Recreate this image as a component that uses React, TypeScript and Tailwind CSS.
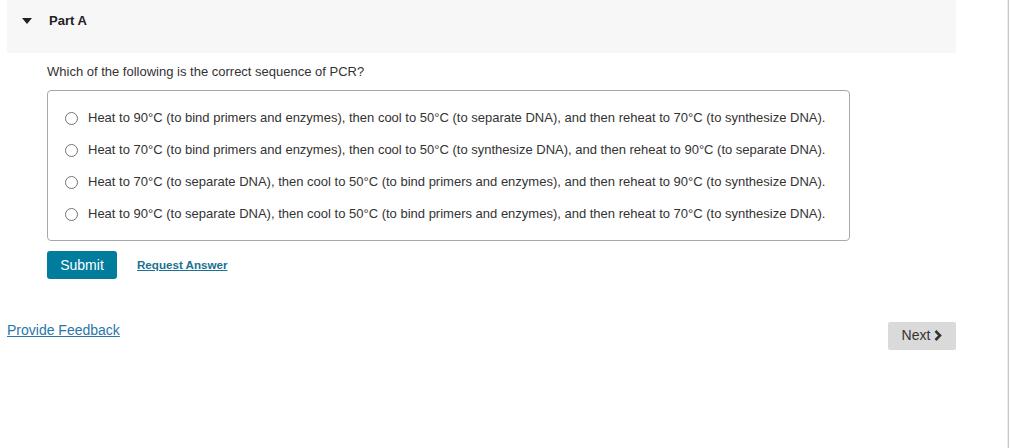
import React from 'react';

const options = [
  'Heat to 90°C (to bind primers and enzymes), then cool to 50°C (to separate DNA), and then reheat to 70°C (to synthesize DNA).',
  'Heat to 70°C (to bind primers and enzymes), then cool to 50°C (to synthesize DNA), and then reheat to 90°C (to separate DNA).',
  'Heat to 70°C (to separate DNA), then cool to 50°C (to bind primers and enzymes), and then reheat to 90°C (to synthesize DNA).',
  'Heat to 90°C (to separate DNA), then cool to 50°C (to bind primers and enzymes), and then reheat to 70°C (to synthesize DNA).',
];

function Radio() {
  return <span className="w-[13px] h-[13px] rounded-full border border-[#767676] bg-white shrink-0" />;
}

export default function App() {
  return (
    <div className="flex h-[448px] w-[1010px] bg-white font-['Liberation_Sans',Arial,sans-serif] text-[#333]">
      <div className="flex-1 pl-[7px] pr-[51px]">
        {/* part header */}
        <div className="flex items-center h-[53px] bg-[#f7f7f7] pl-[15px] pb-[12px]">
          <svg width="10" height="6" viewBox="0 0 10 6" className="mr-[17px]">
            <path d="M0 0 L10 0 L5 6 Z" fill="#222" />
          </svg>
          <span className="text-[13px] font-bold text-[#222]">Part A</span>
        </div>

        <div className="pl-[40px]">
          <p className="mt-[11px] text-[13px] leading-[15px]">Which of the following is the correct sequence of PCR?</p>

          <div className="mt-[11px] w-[803px] h-[151px] border border-[#a8a8a8] rounded-[4px] pt-[11px] pl-[17px]">
            {options.map((o) => (
              <label key={o} className="flex items-center h-[32px] gap-[10px]">
                <Radio />
                <span className="text-[13px] text-[#333] whitespace-nowrap">{o}</span>
              </label>
            ))}
          </div>

          <div className="flex items-center mt-[10px] gap-[20px]">
            <button className="w-[70px] h-[28px] rounded-[3px] bg-[#007c9d] text-white text-[14px]">Submit</button>
            <a href="#" className="text-[11.6px] font-bold text-[#1a6f93] underline">Request Answer</a>
          </div>
        </div>

        <div className="flex items-center justify-between mt-[41px]">
          <a href="#" className="text-[14px] text-[#2777a9] underline mb-[10px]">Provide Feedback</a>
          <button className="flex items-center gap-[4px] w-[68px] h-[28px] justify-center bg-[#dadada] rounded-[2px] text-[14px] text-[#333]">
            Next
            <svg width="8" height="11" viewBox="0 0 8 11">
              <path d="M1.5 1 L6 5.5 L1.5 10" stroke="#333" strokeWidth="2.6" fill="none" />
            </svg>
          </button>
        </div>
      </div>
      <div className="w-[3px] flex">
        <div className="w-[1px] bg-[#ececec]" />
        <div className="w-[1px] bg-[#c9c9c9]" />
        <div className="w-[1px] bg-white" />
      </div>
    </div>
  );
}
